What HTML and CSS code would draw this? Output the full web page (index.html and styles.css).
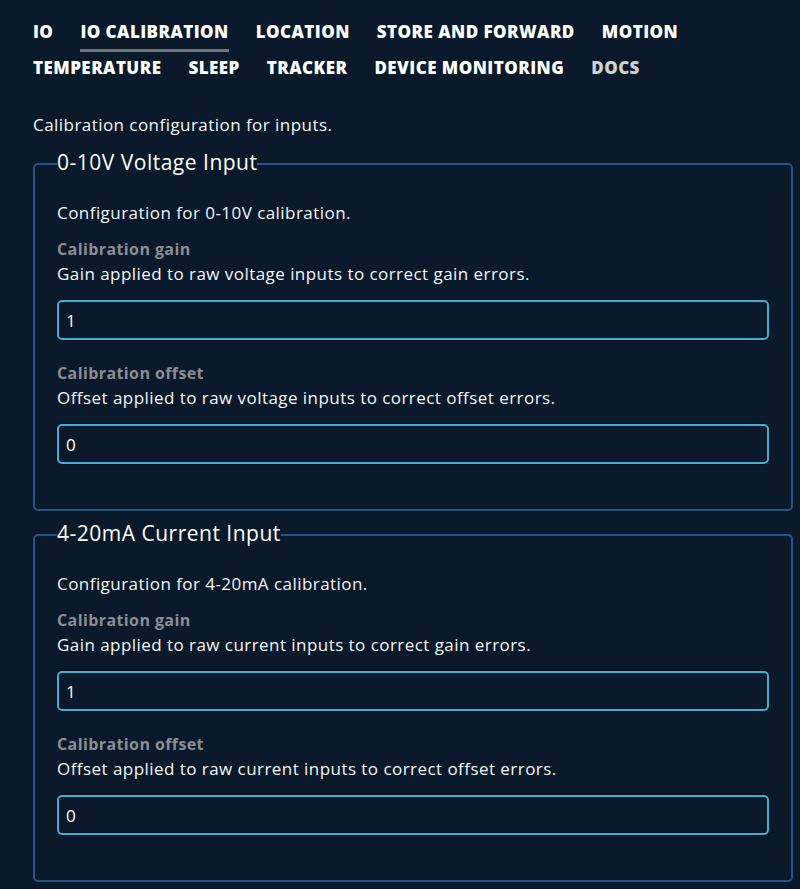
FILE: index.html
```html
<!DOCTYPE html>
<html lang="en">
<head>
<meta charset="utf-8">
<title>IO Calibration</title>
<link rel="stylesheet" href="styles.css">
</head>
<body>
<nav class="tabs">
  <a class="tab">IO</a>
  <a class="tab active">IO CALIBRATION</a>
  <a class="tab">LOCATION</a>
  <a class="tab">STORE AND FORWARD</a>
  <a class="tab">MOTION</a>
  <a class="tab">TEMPERATURE</a>
  <a class="tab">SLEEP</a>
  <a class="tab">TRACKER</a>
  <a class="tab">DEVICE MONITORING</a>
  <a class="tab muted">DOCS</a>
</nav>
<main class="content">
  <p class="intro">Calibration configuration for inputs.</p>
  <fieldset class="group">
    <legend class="group-title">0-10V Voltage Input</legend>
    <p class="group-desc">Configuration for 0-10V calibration.</p>
    <div class="field">
      <div class="field-label">Calibration gain</div>
      <div class="field-help">Gain applied to raw voltage inputs to correct gain errors.</div>
      <input class="field-input" type="text" value="1">
    </div>
    <div class="field">
      <div class="field-label">Calibration offset</div>
      <div class="field-help">Offset applied to raw voltage inputs to correct offset errors.</div>
      <input class="field-input" type="text" value="0">
    </div>
  </fieldset>
  <fieldset class="group">
    <legend class="group-title">4-20mA Current Input</legend>
    <p class="group-desc">Configuration for 4-20mA calibration.</p>
    <div class="field">
      <div class="field-label">Calibration gain</div>
      <div class="field-help">Gain applied to raw current inputs to correct gain errors.</div>
      <input class="field-input" type="text" value="1">
    </div>
    <div class="field">
      <div class="field-label">Calibration offset</div>
      <div class="field-help">Offset applied to raw current inputs to correct offset errors.</div>
      <input class="field-input" type="text" value="0">
    </div>
  </fieldset>
</main>
</body>
</html>
```
FILE: styles.css
```css
html, body {
  margin: 0;
  padding: 0;
  background: #0a1a2a;
}
body {
  color: #f4f6f8;
  font-family: "Open Sans", "Noto Sans", sans-serif;
  font-size: 17px;
  letter-spacing: 0.45px;
  padding: 14px 7px 0 33px;
}
.tabs {
  display: flex;
  flex-wrap: wrap;
  column-gap: 27px;
  max-width: 700px;
}
.tab {
  position: relative;
  font-weight: 800;
  font-size: 17px;
  line-height: 36px;
  color: #ffffff;
  letter-spacing: 0.45px;
}
.tab.muted {
  color: #cfd1d3;
}
.tab.active::after {
  content: "";
  position: absolute;
  left: 0;
  right: 0;
  bottom: -2px;
  height: 3px;
  background: #727578;
}
.content {
  margin-top: 27px;
}
.intro {
  margin: 0 0 15px;
  line-height: 24px;
}
.group {
  margin: 0 0 12px;
  border: 2px solid #24558a;
  border-radius: 5px;
  padding: 25px 22px 45px;
}
.group-title {
  padding: 0;
  font-size: 21px;
  line-height: 24px;
  letter-spacing: 0.5px;
  color: #ffffff;
  position: relative;
  top: -2px;
}
.group-desc {
  margin: 0;
  line-height: 24px;
}
.field {
  display: flex;
  flex-direction: column;
}
.field + .field {
  margin-top: 21px;
}
.group-desc + .field {
  margin-top: 12px;
}
.field-label {
  font-weight: 700;
  font-size: 16px;
  letter-spacing: 0.4px;
  color: #8a8e93;
  line-height: 25px;
}
.field-help {
  line-height: 24px;
}
.field-input {
  margin: 14px 0 0;
  height: 40px;
  box-sizing: border-box;
  background: #0a1a2a;
  border: 2px solid #3fb0d8;
  border-radius: 5px;
  box-shadow: 0 0 0 1px #03101a;
  color: #ffffff;
  font-family: inherit;
  font-size: 17px;
  padding: 0 7px;
  outline: none;
}
```
